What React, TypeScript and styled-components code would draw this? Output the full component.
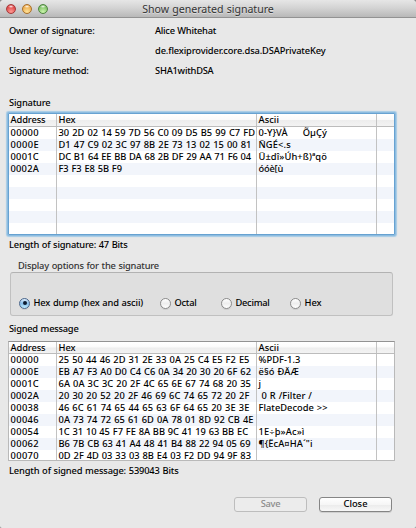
import React, { useLayoutEffect, useRef, useState } from "react";
import styled, { createGlobalStyle, css } from "styled-components";

const GlobalStyle = createGlobalStyle`
  * { box-sizing: border-box; }
  body {
    margin: 0;
    background: #8c8c8c;
    overflow: hidden;
  }
`;

const Window = styled.main`
  width: 416px;
  height: 528px;
  display: flex;
  flex-direction: column;
  background: #e8e8e8;
  border-radius: 4px 4px 2px 2px;
  color: #000;
  font-family: "Noto Sans", "Open Sans", sans-serif;
  font-size: 9.3px;
  font-weight: 500;
  line-height: 12px;
  word-spacing: 0.5px;
  overflow: hidden;
  cursor: default;
`;

const TitleBar = styled.header`
  flex: none;
  height: 18px;
  display: grid;
  grid-template-columns: 1fr auto 1fr;
  align-items: center;
  background: linear-gradient(#e6e6e6, #d4d4d4 45%, #b8b8b8);
  border-bottom: 1px solid #929292;
`;

const Title = styled.h1`
  margin: 0;
  font-size: 10.6px;
  font-weight: 400;
  line-height: 16px;
  color: #333;
  text-shadow: 0 1px 0 rgba(255, 255, 255, 0.45);
`;

const Lights = styled.div`
  display: flex;
  gap: 6px;
  padding: 1px 0 0 6px;
`;

const Light = styled.span<{ $rim: string; $top: string; $glow: string }>`
  width: 10px;
  height: 10px;
  border-radius: 50%;
  border: 1px solid ${(p) => p.$rim};
  background: radial-gradient(ellipse 3px 1.6px at 50% 18%, rgba(255, 255, 255, 0.9), transparent),
    radial-gradient(circle at 50% 85%, ${(p) => p.$glow}, ${(p) => p.$top} 85%);
`;

const Body = styled.section`
  flex: 1;
  display: flex;
  flex-direction: column;
  padding: 6px 0 0 7px;
`;

const Details = styled.dl`
  margin: 0;
  display: grid;
  grid-template-columns: 146px 1fr;
  grid-template-rows: 20px 20px 20px;
  padding-left: 2px;
`;

const Term = styled.dt`
  padding-top: 1px;
`;

const Detail = styled.dd`
  margin: 0;
  padding-top: 1px;
`;

const Caption = styled.p<{ $top: number; $indent?: number; $soft?: boolean }>`
  margin: ${(p) => p.$top}px 0 0 ${(p) => p.$indent ?? 2}px;
  height: 12px;
  color: ${(p) => (p.$soft ? "#333" : "#000")};
`;

const TableFrame = styled.div<{ $focused?: boolean; $top: number; $height: number }>`
  flex: none;
  margin-top: ${(p) => p.$top}px;
  margin-left: 1px;
  width: 387px;
  height: ${(p) => p.$height}px;
  overflow: hidden;
  background: #fff;
  border: 1px solid #b9b9b9;
  border-top-color: #929292;
  ${(p) =>
    p.$focused &&
    css`
      border: 1px solid #67a2d1;
      border-radius: 1px;
      box-shadow: 0 0 0 1px #8dbce0, 0 0 1px 1.5px #a6cbe6, inset 0 0 0 1px #b7d2e8;
    `}
`;

const rowGrid = css`
  display: grid;
  grid-template-columns: 48px 200px 120px 1fr;
`;

const HeaderRow = styled.div<{ $height: number }>`
  ${rowGrid}
  height: ${(p) => p.$height}px;
  background: linear-gradient(#fff, #fafafa 48%, #ededed 52%, #f3f3f3);
  border-bottom: 1px solid #bcbcbc;
`;

const DataRow = styled.div<{ $striped: boolean }>`
  ${rowGrid}
  height: 12px;
  background: ${(p) => (p.$striped ? "#f2f5fb" : "#fff")};
`;

const Cell = styled.div<{ $last?: boolean; $head?: boolean }>`
  padding-left: 1.5px;
  white-space: pre;
  border-right: ${(p) => (p.$last ? "none" : "1px solid #c2c2c2")};
  line-height: ${(p) => (p.$head ? "11px" : "12px")};
`;

const OptionBox = styled.div`
  flex: none;
  margin-left: 3px;
  width: 383px;
  height: 44px;
  display: flex;
  align-items: flex-start;
  padding: 24px 0 0 8px;
  background: #dfdfdf;
  border: 1px solid #c0c0c0;
  border-top-color: #b2b2b2;
  border-radius: 3px;
`;

const RadioLabel = styled.label<{ $width: number }>`
  width: ${(p) => p.$width}px;
  height: 12px;
  display: flex;
  align-items: center;
  gap: 3.5px;
`;

const RadioMark = styled.span<{ $on?: boolean }>`
  flex: none;
  width: 11px;
  height: 11px;
  display: grid;
  place-items: center;
  border-radius: 50%;
  border: 1px solid ${(p) => (p.$on ? "#4a668c" : "#8b8b8b")};
  background: ${(p) =>
    p.$on ? "linear-gradient(#dcecfb, #86bdea 50%, #c0ecfd)" : "linear-gradient(#fff, #eee 50%, #fff)"};
  box-shadow: 0 1px 0 rgba(0, 0, 0, 0.08);

  &::after {
    content: "";
    width: 4px;
    height: 4px;
    border-radius: 50%;
    background: ${(p) => (p.$on ? "#0d1c30" : "transparent")};
  }
`;

const Footer = styled.footer`
  display: flex;
  gap: 12px;
  margin: 20px 0 0 227px;
`;

const PushButton = styled.button`
  width: 73px;
  height: 15px;
  padding: 0 0 1px;
  display: flex;
  align-items: center;
  justify-content: center;
  font: inherit;
  color: #000;
  border: 1px solid #858585;
  border-radius: 3px;
  background: linear-gradient(#fff, #f6f6f6 50%, #ebebeb 52%, #f8f8f8);
  box-shadow: 0 1px 0 rgba(0, 0, 0, 0.1);

  &:disabled {
    color: #8a8a8a;
    border-color: #bdbdbd;
    background: #ececec;
    box-shadow: none;
  }
`;

const Run = styled.span`
  display: inline-block;
  white-space: pre;
`;

/** A line of text tracked so that it spans exactly `width` pixels. */
function Tracked({ children, width }: { children: string; width: number }) {
  const ref = useRef<HTMLSpanElement>(null);
  const [spacing, setSpacing] = useState(0);
  useLayoutEffect(() => {
    const natural = ref.current!.getBoundingClientRect().width - spacing * children.length;
    setSpacing((width - natural) / children.length);
  }, [children, width]);
  return (
    <Run ref={ref} style={{ letterSpacing: `${spacing}px` }}>
      {children}
    </Run>
  );
}

type HexLine = { address: string; hex: string; hexWidth: number; ascii?: string; asciiWidth?: number };

const signatureLines: HexLine[] = [
  { address: "00000", hex: "30 2D 02 14 59 7D 56 C0 09 D5 B5 99 C7 FD", hexWidth: 196.5, ascii: "0-Y}VÀ     ÕµÇý", asciiWidth: 68.5 },
  { address: "0000E", hex: "D1 47 C9 02 3C 97 8B 2E 73 13 02 15 00 81", hexWidth: 193, ascii: "ÑGÉ<.s", asciiWidth: 32.5 },
  { address: "0001C", hex: "DC B1 64 EE BB DA 68 2B DF 29 AA 71 F6 04", hexWidth: 192.5, ascii: "Ü±dî»Úh+ß)ªqö", asciiWidth: 68.5 },
  { address: "0002A", hex: "F3 F3 E8 5B F9", hexWidth: 63.5, ascii: "óóè[ù", asciiWidth: 24.5 },
];

const messageLines: HexLine[] = [
  { address: "00000", hex: "25 50 44 46 2D 31 2E 33 0A 25 C4 E5 F2 E5", hexWidth: 191, ascii: "%PDF-1.3", asciiWidth: 42 },
  { address: "0000E", hex: "EB A7 F3 A0 D0 C4 C6 0A 34 20 30 20 6F 62", hexWidth: 192.5, ascii: "ë§ó ÐÄÆ", asciiWidth: 40.5 },
  { address: "0001C", hex: "6A 0A 3C 3C 20 2F 4C 65 6E 67 74 68 20 35", hexWidth: 192.5, ascii: "j", asciiWidth: 3 },
  { address: "0002A", hex: "20 30 20 52 20 2F 46 69 6C 74 65 72 20 2F", hexWidth: 191, ascii: " 0 R /Filter /", asciiWidth: 53.5 },
  { address: "00038", hex: "46 6C 61 74 65 44 65 63 6F 64 65 20 3E 3E", hexWidth: 191, ascii: "FlateDecode >>", asciiWidth: 69 },
  { address: "00046", hex: "0A 73 74 72 65 61 6D 0A 78 01 8D 92 CB 4E", hexWidth: 195 },
  { address: "00054", hex: "1C 31 10 45 F7 FE 8A BB 9C 41 19 63 BB EC", hexWidth: 189.5, ascii: "1E÷þ»Ac»ì", asciiWidth: 46 },
  { address: "00062", hex: "B6 7B CB 63 41 A4 48 41 B4 88 22 94 05 69", hexWidth: 192, ascii: "¶{ËcA¤HA´\"i", asciiWidth: 54 },
  { address: "00070", hex: "0D 2F 4D 03 33 03 8B E4 03 F2 DD 94 9F 83", hexWidth: 192.5 },
];

type HexTableProps = {
  lines: HexLine[];
  rows: number;
  top: number;
  height: number;
  headerHeight: number;
  focused?: boolean;
};

function HexTable({ lines, rows, top, height, headerHeight, focused }: HexTableProps) {
  return (
    <TableFrame $focused={focused} $top={top} $height={height}>
      <HeaderRow $height={headerHeight}>
        <Cell $head><Tracked width={35}>Address</Tracked></Cell>
        <Cell $head><Tracked width={17}>Hex</Tracked></Cell>
        <Cell $head><Tracked width={20.5}>Ascii</Tracked></Cell>
        <Cell $last />
      </HeaderRow>
      {Array.from({ length: rows }, (_, i) => {
        const line = lines[i];
        return (
          <DataRow key={i} $striped={i % 2 === 1}>
            <Cell>{line && <Tracked width={28.5}>{line.address}</Tracked>}</Cell>
            <Cell>{line && <Tracked width={line.hexWidth}>{line.hex}</Tracked>}</Cell>
            <Cell>{line?.ascii && <Tracked width={line.asciiWidth!}>{line.ascii}</Tracked>}</Cell>
            <Cell $last />
          </DataRow>
        );
      })}
    </TableFrame>
  );
}

const details = [
  { term: "Owner of signature:", termWidth: 85.5, value: "Alice Whitehat", valueWidth: 61 },
  { term: "Used key/curve:", termWidth: 69.5, value: "de.flexiprovider.core.dsa.DSAPrivateKey", valueWidth: 170.5 },
  { term: "Signature method:", termWidth: 79.5, value: "SHA1withDSA", valueWidth: 58.5 },
];

const options = [
  { label: "Hex dump (hex and ascii)", textWidth: 109.5, width: 141, on: true },
  { label: "Octal", textWidth: 22, width: 61 },
  { label: "Decimal", textWidth: 34, width: 69 },
  { label: "Hex", textWidth: 17, width: 60 },
];

export default function App() {
  return (
    <>
      <GlobalStyle />
      <Window>
        <TitleBar>
          <Lights>
            <Light $rim="#a33a3a" $top="#d8383a" $glow="#ff9a93" />
            <Light $rim="#a9702c" $top="#e8a03c" $glow="#ffe39a" />
            <Light $rim="#4f8540" $top="#6fb558" $glow="#cbf5ac" />
          </Lights>
          <Title><Tracked width={131.5}>Show generated signature</Tracked></Title>
        </TitleBar>
        <Body>
          <Details>
            {details.map((d) => (
              <React.Fragment key={d.term}>
                <Term><Tracked width={d.termWidth}>{d.term}</Tracked></Term>
                <Detail><Tracked width={d.valueWidth}>{d.value}</Tracked></Detail>
              </React.Fragment>
            ))}
          </Details>
          <Caption $top={13}><Tracked width={41.5}>Signature</Tracked></Caption>
          <HexTable lines={signatureLines} rows={9} top={4} height={122} headerHeight={13} focused />
          <Caption $top={4}><Tracked width={118.5}>Length of signature: 47 Bits</Tracked></Caption>
          <Caption $top={9} $indent={11} $soft><Tracked width={141}>Display options for the signature</Tracked></Caption>
          <OptionBox>
            {options.map((o) => (
              <RadioLabel key={o.label} $width={o.width}>
                <RadioMark $on={o.on} />
                <Tracked width={o.textWidth}>{o.label}</Tracked>
              </RadioLabel>
            ))}
          </OptionBox>
          <Caption $top={7}><Tracked width={69.5}>Signed message</Tracked></Caption>
          <HexTable lines={messageLines} rows={9} top={6} height={120} headerHeight={12} />
          <Caption $top={4}><Tracked width={169.5}>Length of signed message: 539043 Bits</Tracked></Caption>
          <Footer>
            <PushButton disabled><Tracked width={19.5}>Save</Tracked></PushButton>
            <PushButton><Tracked width={24}>Close</Tracked></PushButton>
          </Footer>
        </Body>
      </Window>
    </>
  );
}
